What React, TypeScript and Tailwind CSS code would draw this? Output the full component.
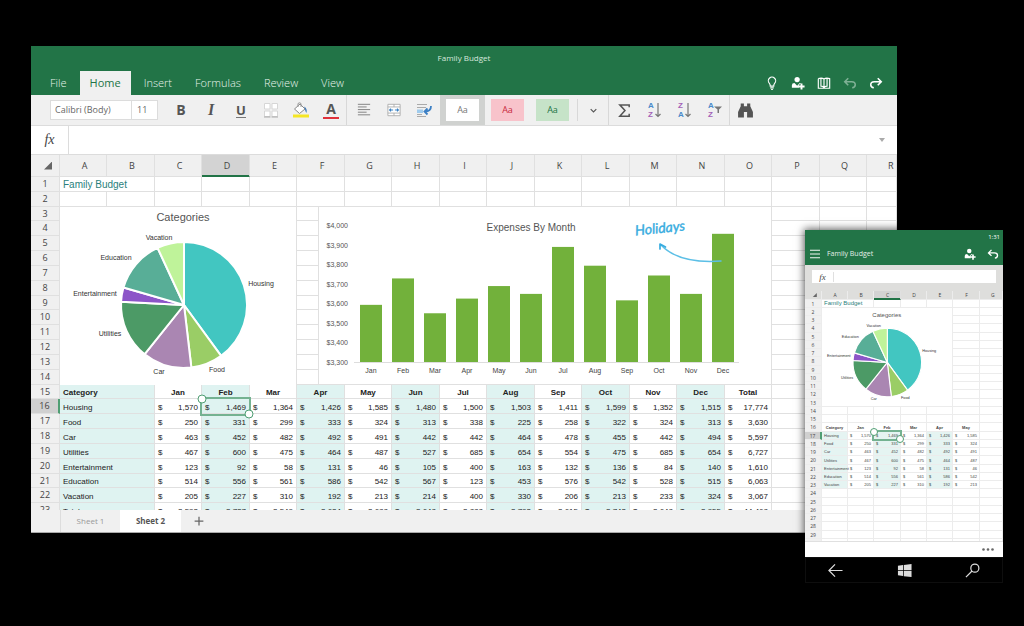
import type { ReactNode } from 'react';
import clsx from 'clsx';

const MONTHS = ['Jan', 'Feb', 'Mar', 'Apr', 'May', 'Jun', 'Jul', 'Aug', 'Sep', 'Oct', 'Nov', 'Dec'];

type Category = { name: string; color: string; values: number[]; labelX: number; labelY: number };

const CATEGORIES: Category[] = [
  { name: 'Housing', color: '#42c6c1', values: [1570, 1469, 1364, 1426, 1585, 1480, 1500, 1503, 1411, 1599, 1352, 1515], labelX: 201, labelY: 79 },
  { name: 'Food', color: '#9acd66', values: [250, 331, 299, 333, 324, 313, 338, 225, 258, 322, 324, 313], labelX: 157, labelY: 165 },
  { name: 'Car', color: '#aa86b2', values: [463, 452, 482, 492, 491, 442, 442, 464, 478, 455, 442, 494], labelX: 99, labelY: 167 },
  { name: 'Utilities', color: '#4c9a66', values: [467, 600, 475, 464, 487, 527, 685, 654, 554, 475, 685, 654], labelX: 50, labelY: 129 },
  { name: 'Entertainment', color: '#8c55c8', values: [123, 92, 58, 131, 46, 105, 400, 163, 132, 136, 84, 140], labelX: 35, labelY: 89 },
  { name: 'Education', color: '#58ae97', values: [514, 556, 561, 586, 542, 567, 123, 453, 576, 542, 528, 515], labelX: 56, labelY: 53 },
  { name: 'Vacation', color: '#bff39a', values: [205, 227, 310, 192, 213, 214, 400, 330, 206, 213, 233, 324], labelX: 99, labelY: 33 },
];

const sum = (list: number[]) => list.reduce((a, b) => a + b, 0);
const MONTH_TOTALS = MONTHS.map((_, i) => sum(CATEGORIES.map((c) => c.values[i])));

/* ---------- charts ---------- */

function PieChart({ viewBox, className }: { viewBox: string; className: string }) {
  const cx = 124;
  const cy = 98;
  const r = 63;
  const total = sum(MONTH_TOTALS);
  const point = (share: number) => {
    const angle = share * 2 * Math.PI;
    return `${cx + r * Math.sin(angle)} ${cy - r * Math.cos(angle)}`;
  };
  let start = 0;

  return (
    <svg viewBox={viewBox} className={className} role="img" aria-label="Categories chart">
      <text x="123" y="14" textAnchor="middle" fontSize="11" fill="#555">Categories</text>
      {CATEGORIES.map((c) => {
        const from = start;
        const share = sum(c.values) / total;
        start += share;
        return (
          <path
            key={c.name}
            d={`M${cx} ${cy}L${point(from)}A${r} ${r} 0 ${share > 0.5 ? 1 : 0} 1 ${point(start)}Z`}
            fill={c.color}
            stroke="#fff"
            strokeWidth="2"
            strokeLinejoin="round"
          />
        );
      })}
      {CATEGORIES.map((c) => (
        <text key={c.name} x={c.labelX} y={c.labelY} textAnchor="middle" fontSize="7" fill="#333">{c.name}</text>
      ))}
    </svg>
  );
}

function BarChart() {
  const base = 155;
  const ticks = [4000, 3900, 3800, 3700, 3600, 3500, 3400, 3300];
  const height = (v: number) => ((v - 3300) / 700) * 137;

  return (
    <svg viewBox="0 0 453 177" className="block h-[177px] w-[453px]" role="img" aria-label="Expenses By Month chart">
      <text x="212" y="24" textAnchor="middle" fontSize="10" fill="#555">Expenses By Month</text>
      {ticks.map((t) => (
        <text key={t} x="29" y={base - height(t) + 3} textAnchor="end" fontSize="7" fill="#555">
          ${t.toLocaleString('en-US')}
        </text>
      ))}
      {MONTHS.map((m, i) => (
        <g key={m}>
          <rect x={41 + i * 32} y={base - height(MONTH_TOTALS[i])} width="22" height={height(MONTH_TOTALS[i])} fill="#72b13b" />
          <text x={52 + i * 32} y="166" textAnchor="middle" fontSize="7" fill="#444">{m}</text>
        </g>
      ))}
      <path d="M35 155.500H420" stroke="#ddd" />
      <text x="341" y="26" textAnchor="middle" fontSize="14" fontStyle="italic" fill="#38ace0" stroke="#38ace0" strokeWidth="0.4" transform="rotate(-6 341 22)" className="font-['Lato',sans-serif]">
        Holidays
      </text>
      <path d="M402 54Q360 57 342 38" fill="none" stroke="#5cbfe6" strokeWidth="1.5" strokeLinecap="round" />
      <path d="M341 42V37L346.500 40" fill="none" stroke="#38ace0" strokeWidth="1.700" strokeLinecap="round" strokeLinejoin="round" />
    </svg>
  );
}

/* ---------- spreadsheet ---------- */

type SheetStyle = {
  firstCol: string;
  cols: string[];
  head: string;
  letter: string;
  lastLetter: string;
  row: string;
  gutter: string;
  line: string;
  text: string;
  pad: string;
  title: string;
  tint: string;
  headerTint: string;
  handle: string;
  ring: string;
};

const DESKTOP_SHEET: SheetStyle = {
  firstCol: 'w-[29px]',
  cols: ['w-[47px]', 'w-[48px]'],
  head: 'h-[22px] text-[9px] leading-[12px] bg-[#f0f0f0]',
  letter: 'pl-[3px]',
  lastLetter: 'pl-[21px] text-left',
  row: 'h-[15px] nth-[6n+3]:h-[14px]',
  gutter: 'text-[9px] leading-[12px]',
  line: 'border-[#e0e0e0]',
  text: 'text-[8px] leading-[11px] text-[#222] align-bottom',
  pad: 'px-[3px]',
  title: 'text-[10px] leading-[12px] align-bottom',
  tint: 'bg-[#dff3f1]',
  headerTint: 'bg-[#dff3f1]',
  handle: 'size-[9px]',
  ring: '-top-[2px] -inset-x-[2px] -bottom-[3px]',
};

const PHONE_SHEET: SheetStyle = {
  firstCol: 'w-[17px]',
  cols: ['w-[26px]', 'w-[26px]', 'w-[27px]'],
  head: 'h-[9px] text-[5px] leading-[7px] bg-[#dededc]',
  letter: 'pl-px',
  lastLetter: 'pl-[11px] text-left',
  row: 'h-[8px] nth-[4n]:h-[9px]',
  gutter: 'text-[5px] leading-[6px]',
  line: 'border-[#ececec]',
  text: 'text-[4px] leading-[6px] text-[#444] align-bottom',
  pad: 'px-[2px]',
  title: 'text-[6px] leading-[7px]',
  tint: 'bg-[#e5f4f2]',
  headerTint: '',
  handle: 'size-[8px]',
  ring: '-inset-[2px]',
};

type SheetProps = {
  letters: string;
  rowCount: number;
  headerRow: number;
  categorySpan: number;
  columns: string[];
  records: { name: string; values: number[] }[];
  s: SheetStyle;
};

function Sheet({ letters, rowCount, headerRow, categorySpan, columns, records, s }: SheetProps) {
  const cols = letters.split('');
  const selectedCol = categorySpan + 1;
  const cell = clsx('border-r border-b p-0 font-normal', s.line);

  const blanks = (from: number) => cols.slice(from).map((c) => <td key={c} className={cell} />);

  const renderRow = (row: number): ReactNode => {
    if (row === 1) {
      return (
        <>
          <td colSpan={2} className={clsx(cell, s.title)}>
            <div className={clsx(s.pad, 'whitespace-nowrap text-[#2a7f7c]')}>Family Budget</div>
          </td>
          {blanks(2)}
        </>
      );
    }
    if (row === headerRow) {
      return (
        <>
          <th scope="col" colSpan={categorySpan} className={clsx(cell, s.text, s.headerTint, categorySpan > 1 && 'text-left')}>
            <div className={clsx(s.pad, 'font-bold')}>Category</div>
          </th>
          {columns.map((c, i) => (
            <th key={c} scope="col" className={clsx(cell, s.text, i % 2 === 1 && s.headerTint)}><b>{c}</b></th>
          ))}
          {blanks(categorySpan + columns.length)}
        </>
      );
    }
    const record = records[row - headerRow - 1];
    if (row < headerRow || !record) return blanks(0);
    return (
      <>
        <th scope="row" colSpan={categorySpan} className={clsx(cell, s.text, s.tint, 'text-left whitespace-nowrap')}>
          <div className={s.pad}>{record.name}</div>
        </th>
        {record.values.map((v, i) => {
          const selected = row === headerRow + 1 && i === 1;
          return (
            <td key={i} className={clsx(cell, s.text, i % 2 === 1 && s.tint, selected && 'relative')}>
              <div className={clsx('flex justify-between', s.pad)}>
                <span>$</span>
                <span>{v.toLocaleString('en-US')}</span>
              </div>
              {selected && (
                <div className={clsx('absolute border-2 border-[#74b291]', s.ring)}>
                  <span className={clsx('absolute top-0 left-0 -translate-1/2 rounded-full border border-[#4f9e73] bg-white', s.handle)} />
                  <span className={clsx('absolute right-0 bottom-0 translate-1/2 rounded-full border border-[#4f9e73] bg-white', s.handle)} />
                </div>
              )}
            </td>
          );
        })}
        {blanks(categorySpan + record.values.length)}
      </>
    );
  };

  return (
    <table className="w-full table-fixed border-separate border-spacing-0 bg-white">
      <colgroup>
        <col className={s.firstCol} />
        {cols.map((c, i) => (
          <col key={c} className={i < cols.length - 1 ? s.cols[i % s.cols.length] : undefined} />
        ))}
      </colgroup>
      <thead className="font-['Open_Sans',sans-serif] text-[#444]">
        <tr className={s.head}>
          <th className={clsx('border-r border-b p-0', s.line)}>
            <svg viewBox="0 0 8 8" className="mr-[25%] ml-auto w-[30%]" aria-hidden="true"><path d="M8 0V8H0Z" fill="#666" /></svg>
          </th>
          {cols.map((c, i) => (
            <th
              key={c}
              scope="col"
              className={clsx('border-r border-b p-0 font-normal', i === selectedCol ? 'border-r-[#e0e0e0] border-b-[#217346] bg-[#d3d3d3] shadow-[inset_0_-1px_0_#217346]' : s.line)}
            >
              <div className={i === cols.length - 1 ? s.lastLetter : s.letter}>{c}</div>
            </th>
          ))}
        </tr>
      </thead>
      <tbody>
        {Array.from({ length: rowCount }, (_, i) => i + 1).map((row) => (
          <tr key={row} className={s.row}>
            <th
              scope="row"
              className={clsx("border-b p-0 font-['Open_Sans',sans-serif] font-normal text-[#444]", s.gutter, s.line, row === headerRow + 1 ? 'border-r-2 border-r-[#4f9e73] bg-[#d0d0d0]' : 'border-r bg-[#f0f0f0]')}
            >
              {row}
            </th>
            {renderRow(row)}
          </tr>
        ))}
      </tbody>
    </table>
  );
}

/* ---------- icons ---------- */

function Icon({ children, className = 'size-4' }: { children: ReactNode; className?: string }) {
  return (
    <svg viewBox="0 0 16 16" fill="none" stroke="currentColor" strokeWidth="1.3" className={className} aria-hidden="true">
      {children}
    </svg>
  );
}

const PersonAdd = () => (
  <>
    <circle cx="7" cy="4" r="3" fill="currentColor" stroke="none" />
    <path d="M1 13.500V10.500Q1 8 4 8L7 11L10 8Q11 8 11.500 8.500L9 10V13.500Z" fill="currentColor" stroke="none" />
    <path d="M12 8.500V15.500M8.500 12H15.500" strokeWidth="2.200" />
  </>
);
const Undo = () => <path d="M6 2.500L2 6.500L6 10.500M2.500 6.500H10Q14 6.500 14 10Q14 13 10.500 13.500" strokeWidth="1.800" />;

const AZ_COLORS: Record<string, string> = { A: '#4a8acb', Z: '#a361b8' };

const AzIcon = ({ top, bottom, children }: { top: string; bottom: string; children: ReactNode }) => (
  <svg viewBox="0 0 16 20" fill="none" className="h-5 w-4 font-['Liberation_Sans',sans-serif]" aria-hidden="true">
    <g fontSize="8" fontWeight="700">
      <text x="2" y="8" fill={AZ_COLORS[top]}>{top}</text>
      <text x="2" y="17.300" fill={AZ_COLORS[bottom]}>{bottom}</text>
    </g>
    {children}
  </svg>
);

function ToolButton({ label, children }: { label: string; children: ReactNode }) {
  return (
    <button type="button" aria-label={label} className="flex h-[30px] w-[30px] shrink-0 items-center justify-center text-[#555]">
      {children}
    </button>
  );
}

const Divider = ({ className = 'h-[30px]' }: { className?: string }) => <span className={clsx('w-px shrink-0 bg-[#d8d8d8]', className)} />;

/* ---------- desktop window ---------- */

function Ribbon() {
  const arrowDown = <path d="M12 3V16.500M9.500 14L12 16.500L14.500 14" stroke="#777" strokeWidth="1.200" />;

  return (
    <div className="flex h-[31px] items-center border-b border-[#dcdcdc] bg-[#f0f0f0] pl-[19px]">
      <div className="mr-[8px] flex h-[20px] w-[108px] shrink-0 border border-[#dcdcdc] bg-white text-[9px] text-[#666]">
        <input aria-label="Font" defaultValue="Calibri (Body)" className="w-[81px] border-r border-[#dcdcdc] pl-1 outline-none" />
        <input aria-label="Font size" defaultValue="11" className="w-[25px] pl-[5px] outline-none" />
      </div>
      <ToolButton label="Bold"><b className="text-[14px] leading-[18px]">B</b></ToolButton>
      <ToolButton label="Italic"><i className="font-['Liberation_Serif',serif] text-[16px] leading-[18px] font-bold">I</i></ToolButton>
      <ToolButton label="Underline"><span className="border-b border-[#777] text-[13px] leading-[14px] font-bold">U</span></ToolButton>
      <ToolButton label="Borders">
        <Icon>
          <path d="M1.500 1.500H7V7H1.500ZM9 1.500H14.500V7H9ZM1.500 9H7V14.500H1.500ZM9 9H14.500V14.500H9Z" fill="#fff" stroke="#d6d6d6" strokeWidth="1" />
          <path d="M1 15H7.500M8.500 15H15" stroke="#aaa" strokeWidth="1" />
        </Icon>
      </ToolButton>
      <ToolButton label="Fill colour">
        <Icon>
          <path d="M0 12.500H16V15.500H0Z" fill="#f5e625" stroke="none" />
          <path d="M7 2L12 7L6.500 11.500L1.500 7Z" fill="#fff" stroke="#888" strokeWidth="1" />
          <path d="M5 5V1.500Q6.500 0 8 1.500V5" stroke="#999" strokeWidth="1" />
          <path d="M11 4.500Q14.500 6 13.500 11Q12 9.500 12 7Z" fill="#3c79b8" stroke="none" />
        </Icon>
      </ToolButton>
      <ToolButton label="Font colour">
        <span className="flex h-[17px] w-4 items-center justify-center border-b-2 border-[#e0313a] text-[14px] leading-[14px] font-bold">A</span>
      </ToolButton>
      <Divider />
      <div className="ml-[2px] flex">
        <ToolButton label="Align left">
          <Icon className="h-4 w-[14px]"><path d="M1 1.500H15M1 4.500H11M1 7.500H15M1 10.500H11M1 13.500H15" stroke="#777" strokeWidth="1" /></Icon>
        </ToolButton>
        <ToolButton label="Merge cells">
          <Icon className="size-[14px]">
            <path d="M1 1.500H15V14.500H1ZM8 1.500V4.500M8 11.500V14.500M1 4.500H15M1 11.500H15" stroke="#aaa" strokeWidth="1" fill="#fff" />
            <path d="M3 8H7M9 8H13M4.500 6.500L3 8L4.500 9.500M11.500 6.500L13 8L11.500 9.500" stroke="#3b82c4" />
          </Icon>
        </ToolButton>
        <ToolButton label="Wrap text">
          <Icon>
            <path d="M1 2.500H11M1 5.500H10M1 12.500H6M1 14.500H10" stroke="#aaa" strokeWidth="1" />
            <path d="M1 7.500H7V11H1Z" fill="#9fcbed" stroke="none" />
            <path d="M15 4Q15 9.500 9 9.500M11.500 6.500L8.500 9.500L11.500 12.500" stroke="#3b7fc4" strokeWidth="1.800" />
          </Icon>
        </ToolButton>
      </div>
      <div className="ml-px flex shrink-0 text-[9px]">
        <button type="button" className="flex h-[30px] w-[45px] items-center justify-center bg-[#d0d2d0]"><span className="h-[22px] w-[33px] bg-white leading-[22px] text-[#777]">Aa</span></button>
        <button type="button" className="flex h-[30px] w-[45px] items-center justify-center"><span className="h-[22px] w-[33px] bg-[#f8c3cb] leading-[22px] text-[#c8283c]">Aa</span></button>
        <button type="button" className="flex h-[30px] w-[45px] items-center justify-center"><span className="h-[22px] w-[33px] bg-[#c6e3c8] leading-[22px] text-[#217346]">Aa</span></button>
      </div>
      <Divider className="ml-[2px] h-[22px]" />
      <ToolButton label="More styles"><Icon className="size-[9px]"><path d="M3 5.500L8 10.500L13 5.500" strokeWidth="2" /></Icon></ToolButton>
      <Divider />
      <ToolButton label="AutoSum"><Icon className="size-[15px]"><path d="M13 4.500V2H3L8.500 8L3 14H13V11.500" strokeWidth="1.600" /></Icon></ToolButton>
      <ToolButton label="Sort ascending"><AzIcon top="A" bottom="Z">{arrowDown}</AzIcon></ToolButton>
      <ToolButton label="Sort descending"><AzIcon top="Z" bottom="A">{arrowDown}</AzIcon></ToolButton>
      <ToolButton label="Filter">
        <AzIcon top="A" bottom="Z"><path d="M8 6.500H16L13 9.500V13H11.500V9.500Z" fill="#777" /></AzIcon>
      </ToolButton>
      <Divider />
      <ToolButton label="Find">
        <Icon className="size-[17px]">
          <path d="M3.500 1.500H6.500V4H9.500V1.500H12.500V4L15 9.500V14.500H9.500V9.500H6.500V14.500H1V9.500L3.500 4Z" fill="#555" stroke="none" />
        </Icon>
      </ToolButton>
    </div>
  );
}

function DesktopWindow() {
  const totals = { name: 'Total', values: MONTH_TOTALS };
  const records = [...CATEGORIES, totals].map(({ name, values }) => ({ name, values: [...values, sum(values)] }));

  return (
    <section className="mr-[127px] ml-[31px] overflow-hidden bg-[#f0f0f0]">
      <header className="bg-[#227447] text-white">
        <h1 className="pt-[5px] text-center text-[8px] leading-[14px] text-[#d7e8de]">Family Budget</h1>
        <div className="flex items-end justify-between pt-[6px] pr-[8px]">
          <nav className="flex gap-[3px] pl-[9px] text-[11px] leading-[24px] font-light text-[#e8f3ec]">
            <button type="button" className="px-[10px]">File</button>
            <button type="button" className="bg-[#f0f0f0] px-[10px] font-normal text-[#227447]">Home</button>
            <button type="button" className="px-[10px]">Insert</button>
            <button type="button" className="px-[10px]">Formulas</button>
            <button type="button" className="px-[10px]">Review</button>
            <button type="button" className="px-[10px]">View</button>
          </nav>
          <div className="flex h-6 items-center">
            <button type="button" aria-label="Tell me" className="flex w-[26px] justify-center">
              <Icon className="size-[14px]"><path d="M6 11.500Q6 9.500 5 8.500A4.200 4.200 0 1 1 11 8.500Q10 9.500 10 11.500ZM6 13.500H10M7 15.500H9" /></Icon>
            </button>
            <button type="button" aria-label="Share" className="flex w-[26px] justify-center"><Icon className="size-[14px]"><PersonAdd /></Icon></button>
            <button type="button" aria-label="Reading view" className="flex w-[26px] justify-center">
              <Icon className="size-[14px]"><path d="M8 3.500V13.500M1.500 3V14H14.500V3Q10.500 1.500 8 3.500Q5.500 1.500 1.500 3M4.500 3V11.500Q7 11.500 8 13.500Q9 11.500 11.500 11.500V3" /></Icon>
            </button>
            <button type="button" aria-label="Undo" className="flex w-[26px] justify-center text-[#7fb095]"><Icon className="size-[14px]"><Undo /></Icon></button>
            <button type="button" aria-label="Redo" className="flex w-[26px] justify-center"><Icon className="size-[14px] -scale-x-100"><Undo /></Icon></button>
          </div>
        </div>
      </header>

      <Ribbon />

      <div className="flex h-[29px] items-center border-b border-[#dcdcdc] bg-white">
        <label htmlFor="formula" className="w-[37px] text-center font-['Liberation_Serif',serif] text-[14px] leading-[20px] text-[#444] italic">fx</label>
        <input id="formula" className="h-full flex-1 border-l border-[#dcdcdc] px-2 text-[10px] outline-none" />
        <button type="button" aria-label="Expand formula bar" className="mr-3">
          <svg viewBox="0 0 6 4" className="w-[6px]"><path d="M0 0H6L3 4Z" fill="#aaa" /></svg>
        </button>
      </div>

      <div className="relative h-[355px] overflow-hidden font-['Liberation_Sans',sans-serif]">
        <Sheet letters="ABCDEFGHIJKLMNOPQR" rowCount={23} headerRow={15} categorySpan={2} columns={[...MONTHS, 'Total']} records={records} s={DESKTOP_SHEET} />
        {/* charts float over the cells */}
        <div className="absolute top-[52px] left-[29px] h-[178px] w-[236px] bg-white">
          <PieChart viewBox="0 0 237 178" className="block h-[178px] w-[237px]" />
        </div>
        <div className="absolute top-[52px] left-[287px] h-[177px] w-[454px] border-r border-l border-[#e0e0e0] bg-white">
          <BarChart />
        </div>
      </div>

      <footer className="flex h-[23px] border-b border-[#aaa] bg-[#f0f0f0] pl-[29px] text-[8px] text-[#999]">
        <button type="button" className="w-[60px] border-l border-[#ddd]">Sheet 1</button>
        <button type="button" className="w-[61px] bg-white font-bold text-[#555]">Sheet 2</button>
        <button type="button" aria-label="Add sheet" className="flex w-[36px] items-center justify-center text-[#666]">
          <Icon className="size-[10px]"><path d="M8 1V15M1 8H15" strokeWidth="2" /></Icon>
        </button>
      </footer>
    </section>
  );
}

/* ---------- phone window ---------- */

function PhoneWindow() {
  const records = CATEGORIES.map((c) => ({ name: c.name, values: c.values.slice(0, 5) }));

  return (
    <section className="absolute top-[230px] right-[21px] w-[198px] bg-white shadow-[0_0_8px_1px_rgba(0,0,0,0.65)]">
      <header className="bg-[#227447] text-white">
        <div className="pt-[3px] pr-[3px] text-right text-[6px] leading-[9px]">1:31</div>
        <div className="flex h-[23px] items-center pr-[4px] pl-[5px]">
          <button type="button" aria-label="Menu">
            <Icon className="size-[10px]"><path d="M0 2H16M0 8H16M0 14H16" strokeWidth="1.500" /></Icon>
          </button>
          <h2 className="ml-[7px] flex-1 text-[7px] leading-[10px] text-[#e2efe7]">Family Budget</h2>
          <button type="button" aria-label="Share" className="mr-[11px]"><Icon className="size-[12px]"><PersonAdd /></Icon></button>
          <button type="button" aria-label="Undo"><Icon className="size-[12px]"><Undo /></Icon></button>
        </div>
      </header>

      <div className="bg-[#dededc] px-[7px] pt-[5px] pb-[8px]">
        <div className="flex h-[13px] items-center bg-white">
          <label htmlFor="phone-formula" className="w-[21px] text-center font-['Liberation_Serif',serif] text-[9px] leading-[12px] text-[#444] italic">fx</label>
          <input id="phone-formula" className="h-[10px] min-w-0 flex-1 border-l border-[#e0e0e0] text-[6px] outline-none" />
        </div>
      </div>

      <div className="relative h-[250px] overflow-hidden font-['Liberation_Sans',sans-serif]">
        <Sheet letters="ABCDEFG" rowCount={30} headerRow={16} categorySpan={1} columns={MONTHS.slice(0, 5)} records={records} s={PHONE_SHEET} />
        <div className="absolute top-[17px] left-[17px] flex h-[98px] w-[130px] items-end bg-white">
          <PieChart viewBox="4 0 237 178" className="block h-[97px] w-[129px]" />
        </div>
      </div>

      <div className="flex h-[16px] items-center justify-end border-t border-[#e0e0e0] pr-[9px]">
        <button type="button" aria-label="More">
          <svg viewBox="0 0 12 3" className="w-[12px]"><circle cx="1.500" cy="1.500" r="1.300" fill="#666" /><circle cx="6" cy="1.500" r="1.300" fill="#666" /><circle cx="10.500" cy="1.500" r="1.300" fill="#666" /></svg>
        </button>
      </div>

      <nav className="flex h-[26px] items-center justify-between border border-[#0e0e0e] bg-black px-[22px] text-[#ddd]">
        <button type="button" aria-label="Back">
          <Icon className="size-[15px]"><path d="M15.500 8H1.500M7.500 1.500L1 8L7.500 14.500" /></Icon>
        </button>
        <button type="button" aria-label="Start">
          <Icon className="size-[15px]"><path d="M1 3L6.500 2.200V7.600H1ZM7.300 2L15.500 1V7.600H7.300ZM1 8.400H6.500V13.800L1 13ZM7.300 8.400H15.500V15L7.300 14Z" fill="currentColor" stroke="none" /></Icon>
        </button>
        <button type="button" aria-label="Search">
          <Icon className="size-[15px]"><circle cx="10.500" cy="5.500" r="4.300" /><path d="M7.500 8.500L1 15" /></Icon>
        </button>
      </nav>
    </section>
  );
}

export default function App() {
  return (
    <main className="relative min-h-screen bg-black pt-[46px] pb-[60px] font-['Open_Sans',sans-serif]">
      <DesktopWindow />
      <PhoneWindow />
    </main>
  );
}
